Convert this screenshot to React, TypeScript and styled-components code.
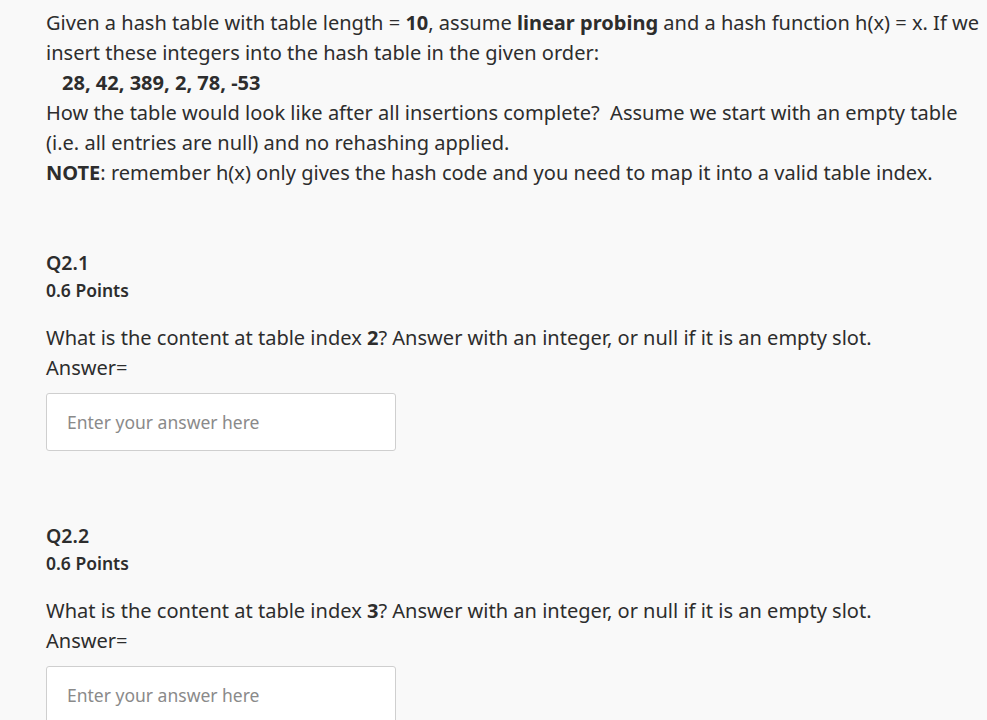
import styled, { createGlobalStyle } from 'styled-components';

const GlobalStyle = createGlobalStyle`
  html, body {
    margin: 0;
    padding: 0;
    background: #f9f9f9;
  }
  body {
    font-family: "Noto Sans", "Open Sans", sans-serif;
    color: #2d2d2d;
  }
`;

const Page = styled.div`
  padding: 8px 0 0 46px;
`;

const Prompt = styled.div`
  font-size: 20.05px;
  line-height: 30px;
  white-space: pre-wrap;
`;

const Line = styled.div<{ $indent?: boolean }>`
  padding-left: ${({ $indent }) => ($indent ? '16px' : '0')};
  font-weight: ${({ $indent }) => ($indent ? 700 : 400)};
`;

const Question = styled.section<{ $first?: boolean }>`
  margin-top: ${({ $first }) => ($first ? '63px' : '73px')};
`;

const QTitle = styled.h3`
  margin: 0;
  font-size: 19.5px;
  line-height: 24px;
  font-weight: 600;
`;

const QPoints = styled.div`
  margin-top: 5px;
  font-size: 17.5px;
  line-height: 20px;
  font-weight: 600;
`;

const QBody = styled.div`
  margin-top: 23px;
  font-size: 20.05px;
  line-height: 30px;
`;

const AnswerInput = styled.input`
  display: block;
  box-sizing: border-box;
  margin-top: 10px;
  width: 350px;
  height: 58px;
  padding: 0 20px;
  background: #fff;
  border: 1px solid #cfcfcf;
  border-radius: 3px;
  font-family: "Noto Sans", "Open Sans", sans-serif;
  font-size: 17.5px;
  color: #2d2d2d;
  outline: none;

  &::placeholder {
    color: #8a8a8a;
  }
`;

const questions = [
  { id: 'Q2.1', index: 2 },
  { id: 'Q2.2', index: 3 },
];

export default function App() {
  return (
    <>
      <GlobalStyle />
      <Page>
        <Prompt>
          <Line>
            Given a hash table with table length = <b>10</b>, assume <b>linear probing</b> and a hash
            function h(x) = x. If we
          </Line>
          <Line>insert these integers into the hash table in the given order:</Line>
          <Line $indent>28, 42, 389, 2, 78, -53</Line>
          <Line>{'How the table would look like after all insertions complete?  Assume we start with an empty table'}</Line>
          <Line>(i.e. all entries are null) and no rehashing applied.</Line>
          <Line>
            <b>NOTE</b>: remember h(x) only gives the hash code and you need to map it into a valid
            table index.
          </Line>
        </Prompt>

        {questions.map((q, i) => (
          <Question key={q.id} $first={i === 0}>
            <QTitle>{q.id}</QTitle>
            <QPoints>0.6 Points</QPoints>
            <QBody>
              <div>
                What is the content at table index <b>{q.index}</b>? Answer with an integer, or null if
                it is an empty slot.
              </div>
              <div>Answer=</div>
            </QBody>
            <AnswerInput placeholder="Enter your answer here" />
          </Question>
        ))}
      </Page>
    </>
  );
}
